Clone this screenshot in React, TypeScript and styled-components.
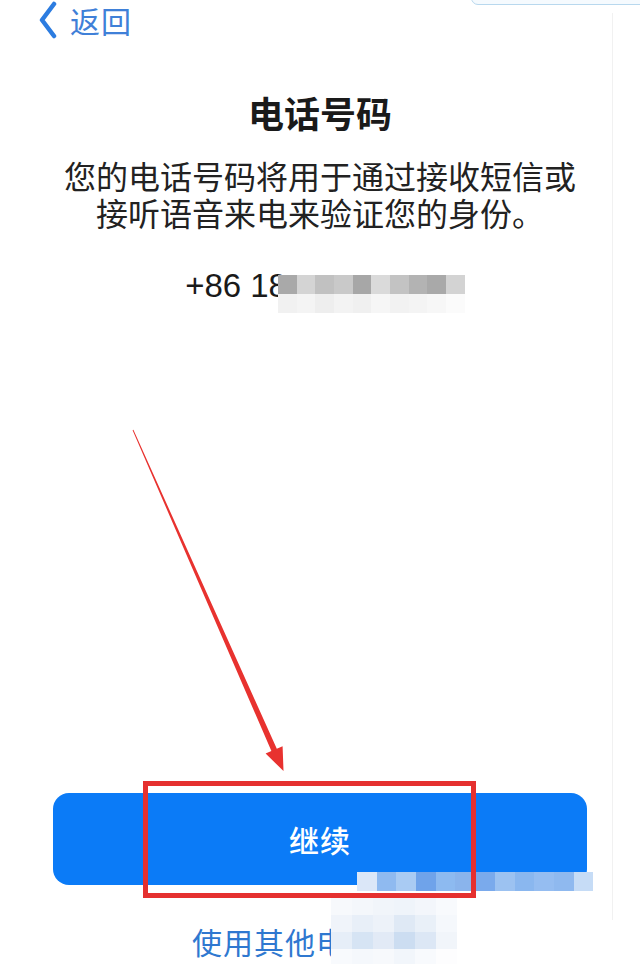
import styled, { createGlobalStyle } from 'styled-components';

const GlobalStyle = createGlobalStyle`
  html, body {
    margin: 0;
    padding: 0;
    background: #fff;
  }
  body {
    font-family: "Noto Sans CJK SC", "Noto Sans", sans-serif;
    color: #1c1c1c;
  }
`;

const Screen = styled.div`
  position: relative;
  width: 640px;
  height: 964px;
  overflow: hidden;
  background: #fff;
  display: flex;
  flex-direction: column;
  align-items: center;
  padding-bottom: 5px;
  box-sizing: border-box;
  &::after {
    content: '';
    position: absolute;
    top: 13px;
    bottom: 44px;
    left: 612px;
    width: 1px;
    background: #f1f1f1;
  }
`;

const TopTab = styled.div`
  position: absolute;
  top: -20px;
  left: 471px;
  width: 200px;
  height: 23px;
  border: 1.5px solid #b8d8ee;
  border-radius: 7px;
  background: #f5fafe;
`;

const TopBar = styled.div`
  align-self: stretch;
  height: 40px;
  display: flex;
  align-items: center;
  gap: 13px;
  padding-left: 39px;
  color: #3f80d8;
`;

const BackText = styled.span`
  font-size: 30px;
  line-height: 36px;
  letter-spacing: 1px;
`;

const Title = styled.h1`
  margin: 50px 0 0;
  font-size: 36px;
  line-height: 44px;
  font-weight: 700;
  color: #1a1a1a;
`;

const Description = styled.p`
  margin: 23px 0 0;
  font-size: 32px;
  line-height: 37px;
  text-align: center;
  color: #222;
`;

const PhoneLine = styled.div`
  margin-top: 35px;
  padding-left: 10px;
  display: flex;
  align-items: flex-start;
  font-family: "Liberation Sans", "Noto Sans CJK SC", sans-serif;
  font-size: 33px;
  line-height: 40px;
  color: #1a1a1a;
`;

const Mosaic = styled.div<{ $cols: number; $cell: number; $rowH?: number }>`
  display: grid;
  grid-template-columns: repeat(${p => p.$cols}, ${p => p.$cell}px);
  grid-auto-rows: ${p => p.$rowH ?? p.$cell}px;
`;

const InlineMosaic = styled(Mosaic)`
  margin: 9px 0 0 -9px;
`;

const Cell = styled.span<{ $c: string }>`
  background: ${p => p.$c};
`;

const PrimaryButton = styled.button`
  margin-top: auto;
  width: 534px;
  height: 92px;
  border: none;
  border-radius: 16px;
  background: #0b7bf7;
  color: #fff;
  font-family: "Noto Sans CJK SC", sans-serif;
  font-size: 30px;
  font-weight: 500;
  letter-spacing: 1px;
`;

const SecondaryLink = styled.div`
  margin-top: 38px;
  padding-right: 8px;
  font-size: 30px;
  line-height: 36px;
  color: #2f78d0;
  letter-spacing: 1px;
`;

const Overlay = styled.div<{ $x: number; $y: number }>`
  position: absolute;
  left: ${p => p.$x}px;
  top: ${p => p.$y}px;
`;

const Highlight = styled.div`
  position: absolute;
  left: 143px;
  top: 781px;
  width: 333px;
  height: 117px;
  box-sizing: border-box;
  border: 5px solid #e5302f;
`;

const ArrowLayer = styled.svg`
  position: absolute;
  left: 0;
  top: 0;
  pointer-events: none;
`;

const phoneCells = [
  ['#a9a9a9', '#d4d4d4', '#c1c1c1', '#c9c9c9', '#a7a7a7', '#dadada', '#c3c3c3', '#b3b3b3', '#a9a9a9', '#d3d3d3'],
  ['#f1f1f1', '#f4f4f4', '#eeeeee', '#f3f3f3', '#f0f0f0', '#f6f6f6', '#f2f2f2', '#f4f4f4', '#f7f7f7', '#fbfbfb'],
];

const buttonCells = [
  '#dbe7f8', '#8fbaf0', '#a9cbf3', '#6fa3ea', '#8dbaf0', '#8ab4ec',
  '#7aaaec', '#9cc2f1', '#8ab7ef', '#95bdf1', '#8fb9ef', '#c6dcf6',
];

const belowCells = [
  ['#f7f9fc', '#f4f7fb', '#f1f5fa', '#eff4fa', '#f3f6fb', '#f8fafd'],
  ['#f0f4fa', '#e8eff8', '#edf2f9', '#dfe9f5', '#e9f0f8', '#f5f8fc'],
  ['#e6eef8', '#d6e4f4', '#e2eaf6', '#ccddf1', '#dce7f5', '#f1f5fa'],
  ['#f8fafd', '#f5f8fc', '#f7f9fc', '#f2f6fb', '#f8fafd', '#fdfdfe'],
];

export default function App() {
  return (
    <>
      <GlobalStyle />
      <Screen>
        <TopTab />
        <TopBar>
          <svg width="18" height="38" viewBox="0 0 18 38" fill="none">
            <path d="M15 3 L3 19 L15 35" stroke="#2c7ce0" strokeWidth="4.5" strokeLinecap="round" strokeLinejoin="round" />
          </svg>
          <BackText>返回</BackText>
        </TopBar>

        <Title>电话号码</Title>
        <Description>
          您的电话号码将用于通过接收短信或
          <br />
          接听语音来电来验证您的身份。
        </Description>

        <PhoneLine>
          <span>+86 18</span>
          <InlineMosaic $cols={10} $cell={18.7} $rowH={19}>
            {phoneCells.flat().map((c, i) => <Cell key={i} $c={c} />)}
          </InlineMosaic>
        </PhoneLine>

        <PrimaryButton>继续</PrimaryButton>
        <SecondaryLink>使用其他电话号码</SecondaryLink>

        <Overlay $x={357} $y={872}>
          <Mosaic $cols={12} $cell={19.7} $rowH={19}>
            {buttonCells.map((c, i) => <Cell key={i} $c={c} />)}
          </Mosaic>
        </Overlay>
        <Overlay $x={331} $y={898}>
          <Mosaic $cols={6} $cell={21} $rowH={17}>
            {belowCells.flat().map((c, i) => <Cell key={i} $c={c} />)}
          </Mosaic>
        </Overlay>

        <Highlight />
        <ArrowLayer width="640" height="964" viewBox="0 0 640 964">
          <polygon
            points="132.6,430.2 133.4,429.8 276.8,748.7 282.6,746.2 283.5,771 265.6,753.6 271.4,751.1"
            fill="#e8322f"
          />
        </ArrowLayer>
      </Screen>
    </>
  );
}
